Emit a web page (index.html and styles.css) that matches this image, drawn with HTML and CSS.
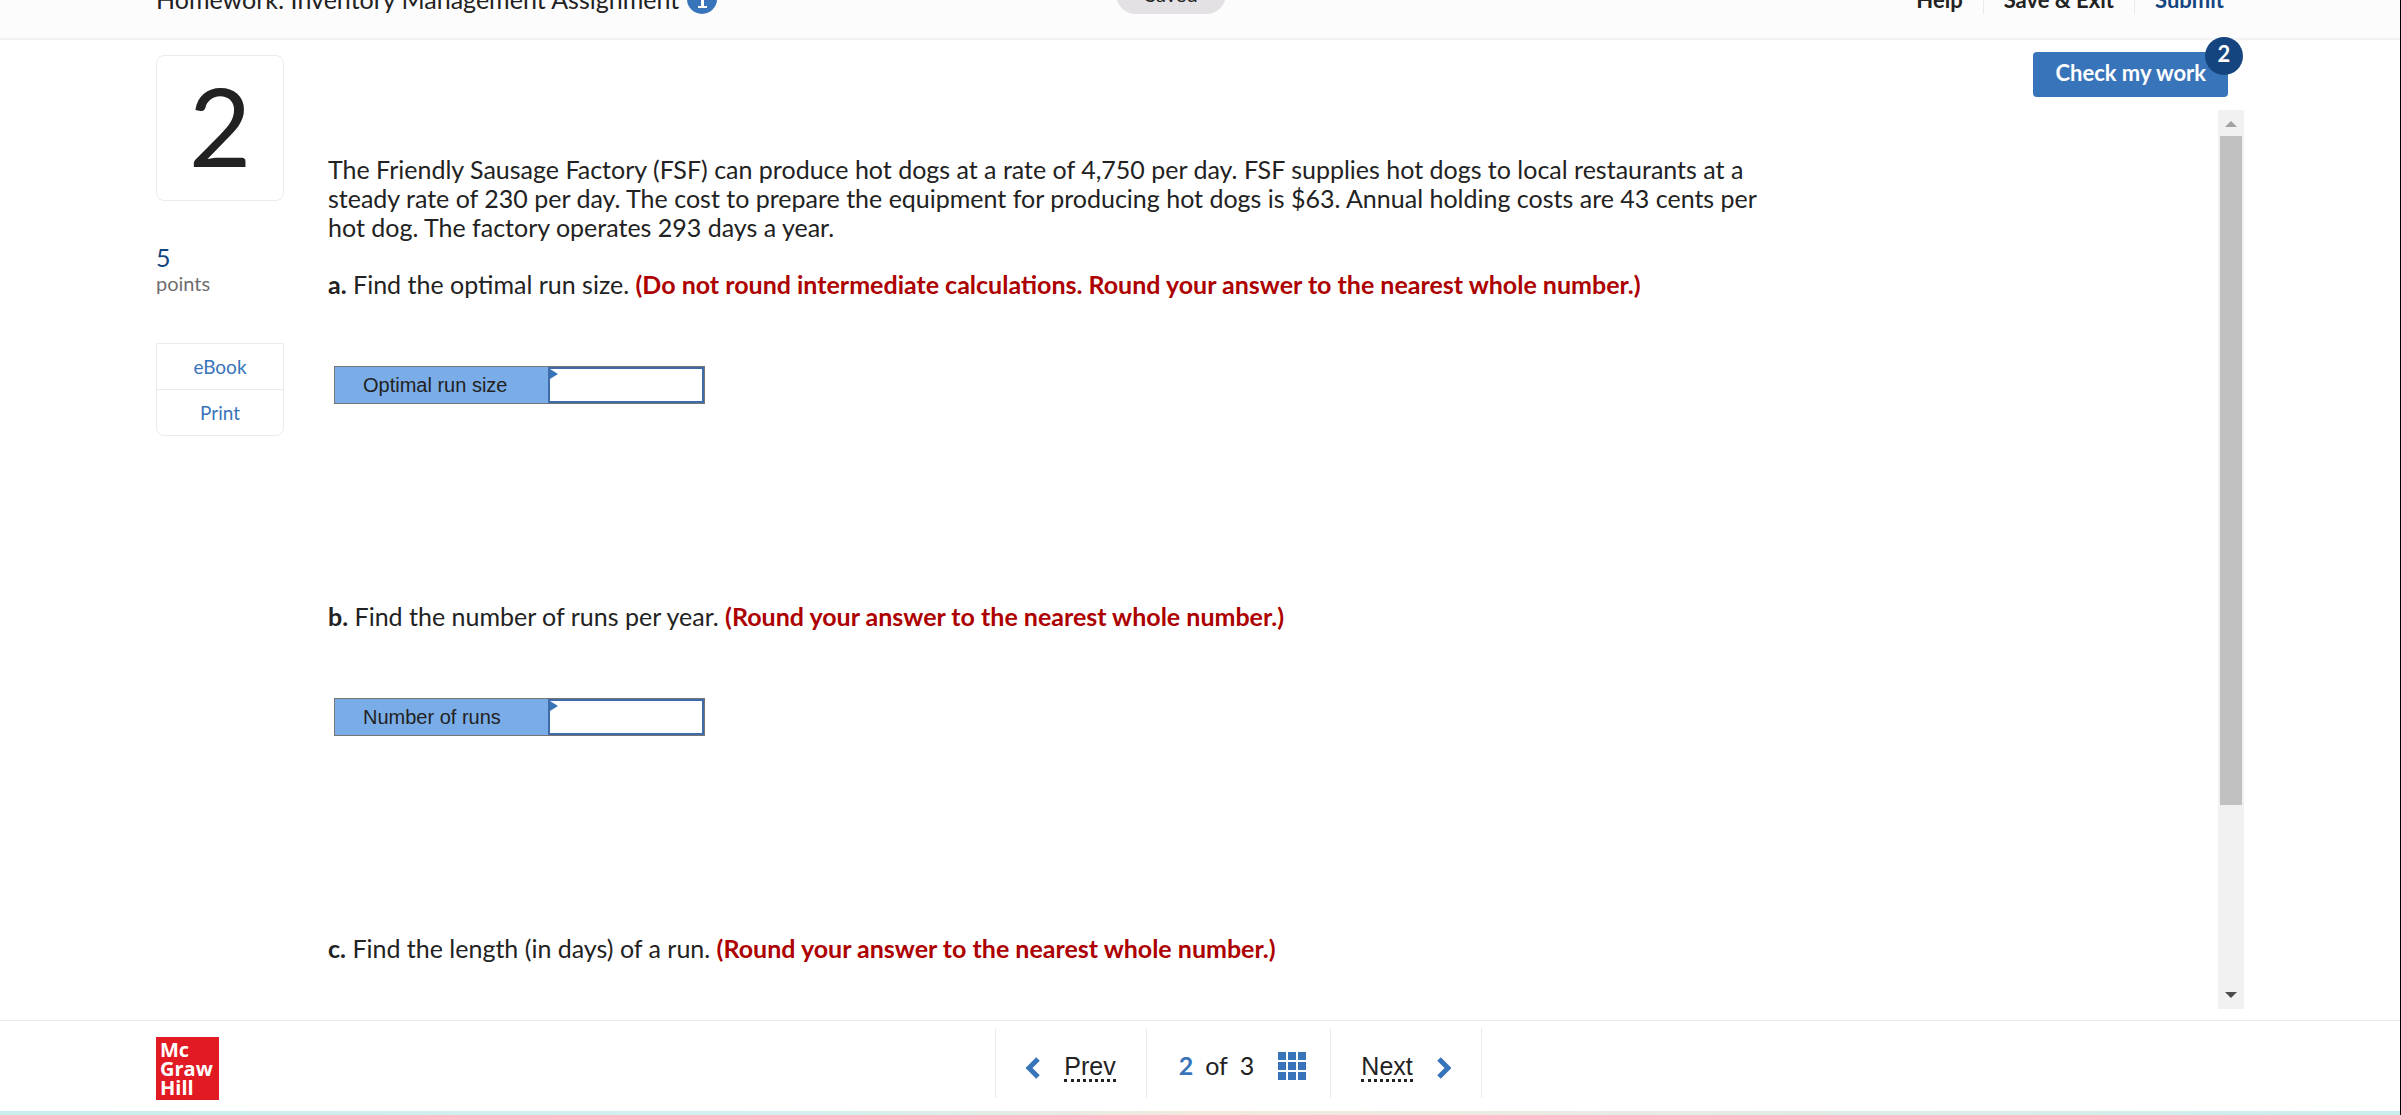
FILE: index.html
```html
<!DOCTYPE html>
<html lang="en">
<head>
    <meta charset="UTF-8">
    <meta name="viewport" content="width=device-width, initial-scale=1.0">
    <title>Homework: Inventory Management Assignment</title>
    <link rel="stylesheet" href="styles.css">
</head>
<body>
    <header class="topbar">
        <div class="assignment">
            <span>Homework: Inventory Management Assignment</span>
            <svg class="info-icon" viewBox="0 0 30 30" aria-hidden="true">
                <circle cx="15" cy="15" r="15" fill="#3874b9"/>
                <circle cx="15" cy="7" r="3" fill="#fff"/>
                <path d="M11 12h6v10h3v2h-9v-2h3v-8h-3z" fill="#fff"/>
            </svg>
        </div>
        <span class="saved">Saved</span>
        <nav class="top-links">
            <a href="#">Help</a>
            <a href="#">Save &amp; Exit</a>
            <a href="#" class="submit">Submit</a>
        </nav>
    </header>

    <main class="workspace">
        <aside class="sidebar">
            <div class="question-number">2</div>
            <div class="points"><span class="points-value">5</span>points</div>
            <div class="tools">
                <a href="#">eBook</a>
                <a href="#">Print</a>
            </div>
        </aside>

        <section class="panel">
            <div class="toolbar">
                <button type="button" class="check-btn">Check my work<span class="badge">2</span></button>
            </div>
            <div class="scroll-area">
                <div class="question">
                    <p>The Friendly Sausage Factory (FSF) can produce hot dogs at a rate of 4,750 per day. FSF supplies hot dogs to local restaurants at a steady rate of 230 per day. The cost to prepare the equipment for producing hot dogs is $63. Annual holding costs are 43 cents per hot dog. The factory operates 293 days a year.</p>

                    <p><b>a.</b> Find the optimal run size. <strong>(Do not round intermediate calculations. Round your answer to the nearest whole number.)</strong></p>
                    <div class="answer">
                        <label for="runSize">Optimal run size</label>
                        <div class="answer-cell"><input type="text" id="runSize" name="runSize"></div>
                    </div>

                    <p><b>b.</b> Find the number of runs per year. <strong>(Round your answer to the nearest whole number.)</strong></p>
                    <div class="answer">
                        <label for="numRuns">Number of runs</label>
                        <div class="answer-cell"><input type="text" id="numRuns" name="numRuns"></div>
                    </div>

                    <p><b>c.</b> Find the length (in days) of a run. <strong>(Round your answer to the nearest whole number.)</strong></p>
                </div>
                <div class="scrollbar">
                    <svg class="arrow" viewBox="0 0 12 6" aria-hidden="true"><path d="M0 6l6-6 6 6z" fill="#a0a0a0"/></svg>
                    <div class="track"><div class="thumb"></div></div>
                    <svg class="arrow" viewBox="0 0 12 6" aria-hidden="true"><path d="M0 0h12l-6 6z" fill="#4c4c4c"/></svg>
                </div>
            </div>
        </section>
    </main>

    <footer class="bottombar">
        <div class="logo">Mc<br>Graw<br>Hill</div>
        <nav class="pager">
            <a href="#" class="step">
                <svg class="chevron" viewBox="0 0 14 22" aria-hidden="true"><path d="M12 2L3 11l9 9" fill="none" stroke="#3874b9" stroke-width="5"/></svg>
                <span class="step-text">Prev</span>
            </a>
            <div class="position">
                <b>2</b><span>of</span><span>3</span>
                <svg class="grid-icon" viewBox="0 0 28 28" aria-hidden="true">
                    <path d="M0 0h8v8H0zM10 0h8v8h-8zM20 0h8v8h-8zM0 10h8v8H0zM10 10h8v8h-8zM20 10h8v8h-8zM0 20h8v8H0zM10 20h8v8h-8zM20 20h8v8h-8z" fill="#3874b9"/>
                </svg>
            </div>
            <a href="#" class="step">
                <span class="step-text">Next</span>
                <svg class="chevron" viewBox="0 0 14 22" aria-hidden="true"><path d="M2 2l9 9-9 9" fill="none" stroke="#3874b9" stroke-width="5"/></svg>
            </a>
        </nav>
    </footer>
    <div class="strip"></div>
</body>
</html>
```
FILE: styles.css
```css
* {
    box-sizing: border-box;
}
body {
    font-family: Lato, sans-serif;
    font-size: 25px;
    line-height: 29px;
    color: #222;
    margin: 0;
    height: 100vh;
    display: flex;
    flex-direction: column;
    overflow: hidden;
    background: #fff;
    border-right: 1px solid #000;
}
a {
    color: inherit;
    text-decoration: none;
}

/* top bar, partly scrolled out of view */
.topbar {
    flex: none;
    height: 40px;
    padding: 0 156px 24px;
    display: flex;
    align-items: flex-end;
    background: #fcfcfc;
    border-bottom: 2px solid #f2f2f2;
}
.assignment {
    flex: 0 0 46%;
    display: flex;
    align-items: center;
    gap: 8px;
    white-space: nowrap;
}
.info-icon {
    width: 30px;
    height: 30px;
}
.saved {
    width: 110px;
    height: 40px;
    line-height: 40px;
    border-radius: 20px;
    background: #e4e1e4;
    text-align: center;
    font-size: 20px;
}
.top-links {
    margin-left: auto;
    display: flex;
    font-size: 22px;
    font-weight: bold;
}
.top-links a {
    padding: 0 20px;
}
.top-links a + a {
    border-left: 1px solid #ebebeb;
}
.top-links .submit {
    color: #14457f;
}

.workspace {
    flex: 1;
    min-height: 0;
    display: flex;
    gap: 44px;
    padding: 0 156px 11px;
}
.sidebar {
    flex: 0 0 128px;
    padding-top: 15px;
}
.question-number {
    height: 146px;
    line-height: 138px;
    border: 1px solid #ebebeb;
    border-radius: 8px;
    text-align: center;
    font-size: 108px;
}
.points {
    margin-top: 42px;
    font-size: 20px;
    line-height: 25px;
    color: #6e6e6e;
}
.points-value {
    display: block;
    font-size: 25px;
    line-height: 28px;
    color: #14457f;
}
.tools {
    margin-top: 47px;
    border: 1px solid #ebebeb;
    border-radius: 0 0 8px 8px;
    text-align: center;
    font-size: 19px;
    color: #3874b9;
}
.tools a {
    display: block;
    line-height: 45px;
}
.tools a + a {
    border-top: 1px solid #ebebeb;
}

.panel {
    flex: 1;
    display: flex;
    flex-direction: column;
}
.toolbar {
    height: 70px;
    flex: none;
    padding: 12px 16px 0 0;
    display: flex;
    justify-content: flex-end;
    align-items: flex-start;
}
.check-btn {
    position: relative;
    height: 45px;
    padding: 0 22px 4px;
    border: 0;
    border-radius: 4px;
    background: #3874b9;
    color: #fff;
    font-family: inherit;
    font-size: 22px;
    font-weight: bold;
    cursor: pointer;
}
.badge {
    position: absolute;
    top: -15px;
    right: -15px;
    width: 38px;
    height: 38px;
    line-height: 34px;
    border-radius: 50%;
    background: #14457f;
}
.scroll-area {
    flex: 1;
    min-height: 0;
    display: flex;
    justify-content: space-between;
    overflow: hidden;
}
.question {
    max-width: 1455px;
    padding-top: 45px;
}
.question p {
    margin: 0 0 28px;
}
.question strong {
    color: #ad0000;
}
.answer {
    display: flex;
    width: 371px;
    height: 38px;
    margin: 67px 0 198px 6px;
    font-family: "Liberation Sans", Arial, sans-serif;
    font-size: 20px;
    background: #7aade7;
    border: 1px solid #757575;
}
.answer label {
    width: 213px;
    padding-left: 28px;
    line-height: 36px;
}
.answer-cell {
    position: relative;
    flex: 1;
}
.answer-cell::before {
    content: "";
    position: absolute;
    top: 2px;
    left: 2px;
    border: 5px solid transparent;
    border-left: 8px solid #3874b9;
    border-right: 0;
}
.answer-cell input {
    display: block;
    width: 100%;
    height: 100%;
    padding: 0 12px;
    border: 2px solid #3f6ca8;
    background: #fff;
    font: inherit;
}

.scrollbar {
    width: 26px;
    flex: none;
    display: flex;
    flex-direction: column;
    align-items: center;
    padding: 11px 0;
    background: #f1f1f1;
}
.arrow {
    width: 12px;
    height: 6px;
}
.track {
    flex: 1;
    padding: 9px 0;
}
.thumb {
    width: 22px;
    height: 79%;
    background: #c1c1c1;
}

.bottombar {
    flex: none;
    height: 91px;
    display: flex;
    align-items: center;
    gap: 14px;
    padding: 0 156px 6px;
    border-top: 1px solid #ebebeb;
}
.logo {
    width: 63px;
    height: 63px;
    margin-top: 10px;
    padding: 3px 4px;
    background: #e21a23;
    color: #fff;
    font-family: "Open Sans", sans-serif;
    font-size: 20px;
    font-weight: bold;
    line-height: 19px;
}
.pager {
    flex: 1;
    display: flex;
    justify-content: center;
}
.step,
.position {
    height: 70px;
    display: flex;
    align-items: center;
    border-left: 1px solid #ebebeb;
}
.step {
    gap: 24px;
    padding: 10px 30px 0;
    font-family: "Liberation Sans", Arial, sans-serif;
    font-size: 25px;
}
.step:last-child {
    border-right: 1px solid #ebebeb;
}
.step-text {
    line-height: 25px;
    border-bottom: 3px dotted #222;
}
.chevron {
    width: 14px;
    height: 22px;
}
.position {
    gap: 12px;
    padding: 5px 24px 0 32px;
}
.position b {
    color: #3874b9;
}
.grid-icon {
    width: 28px;
    height: 28px;
    margin-left: 12px;
}
.strip {
    flex: none;
    height: 4px;
    background: linear-gradient(90deg, #c9eeed, #d5efed 35%, #f3e8dd 50%, #e6ebe5 70%, #c9eeed);
}
```
